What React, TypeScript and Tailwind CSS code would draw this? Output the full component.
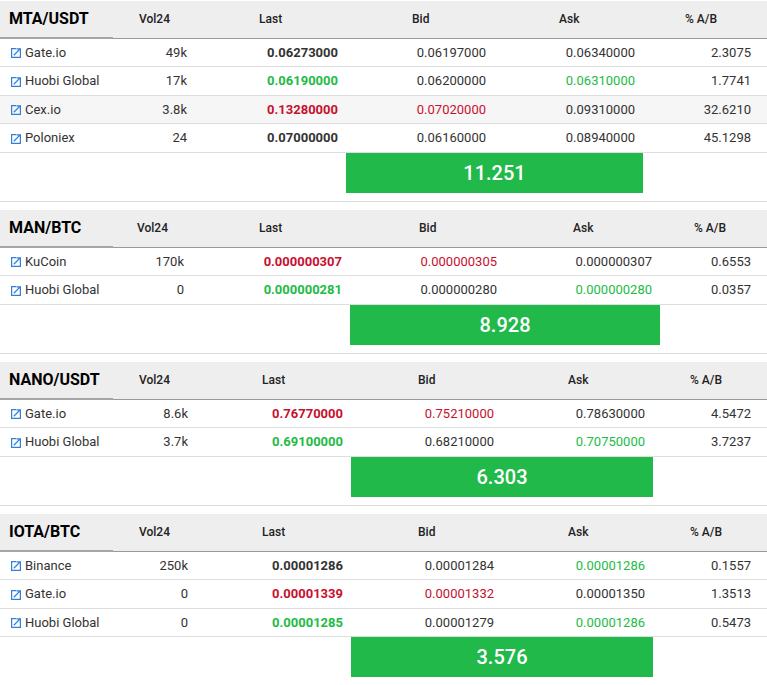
const GREEN = 'text-[#22bb46]';
const RED = 'text-[#c8102e]';

type Cell = { v: string; c?: string };
type Row = { name: string; vol: string; last: Cell; bid: Cell; ask: Cell; pct: string; shaded?: boolean };
type Market = {
  title: string;
  cols: string;
  heads: string[];
  rowsHeight: string;
  spread: string;
  rows: Row[];
};

const markets: Market[] = [
  {
    title: 'MTA/USDT',
    cols: 'grid-cols-[113px_82px_151px_148px_149px_124px]',
    heads: ['pl-[26px]', 'pl-[64px]', 'pl-[66px]', 'pl-[65px]', 'pl-[42px]'],
    rowsHeight: 'h-[114px]',
    spread: '11.251',
    rows: [
      { name: 'Gate.io', vol: '49k', last: { v: '0.06273000' }, bid: { v: '0.06197000' }, ask: { v: '0.06340000' }, pct: '2.3075' },
      { name: 'Huobi Global', vol: '17k', last: { v: '0.06190000', c: GREEN }, bid: { v: '0.06200000' }, ask: { v: '0.06310000', c: GREEN }, pct: '1.7741' },
      { name: 'Cex.io', vol: '3.8k', last: { v: '0.13280000', c: RED }, bid: { v: '0.07020000', c: RED }, ask: { v: '0.09310000' }, pct: '32.6210', shaded: true },
      { name: 'Poloniex', vol: '24', last: { v: '0.07000000' }, bid: { v: '0.06160000' }, ask: { v: '0.08940000' }, pct: '45.1298' },
    ],
  },
  {
    title: 'MAN/BTC',
    cols: 'grid-cols-[113px_79px_158px_155px_155px_107px]',
    heads: ['pl-[24px]', 'pl-[67px]', 'pl-[69px]', 'pl-[68px]', 'pl-[34px]'],
    rowsHeight: 'h-[57px]',
    spread: '8.928',
    rows: [
      { name: 'KuCoin', vol: '170k', last: { v: '0.000000307', c: RED }, bid: { v: '0.000000305', c: RED }, ask: { v: '0.000000307' }, pct: '0.6553' },
      { name: 'Huobi Global', vol: '0', last: { v: '0.000000281', c: GREEN }, bid: { v: '0.000000280' }, ask: { v: '0.000000280', c: GREEN }, pct: '0.0357' },
    ],
  },
  {
    title: 'NANO/USDT',
    cols: 'grid-cols-[113px_83px_155px_151px_151px_114px]',
    heads: ['pl-[26px]', 'pl-[66px]', 'pl-[67px]', 'pl-[66px]', 'pl-[37px]'],
    rowsHeight: 'h-[57px]',
    spread: '6.303',
    rows: [
      { name: 'Gate.io', vol: '8.6k', last: { v: '0.76770000', c: RED }, bid: { v: '0.75210000', c: RED }, ask: { v: '0.78630000' }, pct: '4.5472' },
      { name: 'Huobi Global', vol: '3.7k', last: { v: '0.69100000', c: GREEN }, bid: { v: '0.68210000' }, ask: { v: '0.70750000', c: GREEN }, pct: '3.7237' },
    ],
  },
  {
    title: 'IOTA/BTC',
    cols: 'grid-cols-[113px_83px_155px_151px_151px_114px]',
    heads: ['pl-[26px]', 'pl-[66px]', 'pl-[67px]', 'pl-[66px]', 'pl-[37px]'],
    rowsHeight: 'h-[85px]',
    spread: '3.576',
    rows: [
      { name: 'Binance', vol: '250k', last: { v: '0.00001286' }, bid: { v: '0.00001284' }, ask: { v: '0.00001286', c: GREEN }, pct: '0.1557' },
      { name: 'Gate.io', vol: '0', last: { v: '0.00001339', c: RED }, bid: { v: '0.00001332', c: RED }, ask: { v: '0.00001350' }, pct: '1.3513' },
      { name: 'Huobi Global', vol: '0', last: { v: '0.00001285', c: GREEN }, bid: { v: '0.00001279' }, ask: { v: '0.00001286', c: GREEN }, pct: '0.5473' },
    ],
  },
];

function LinkIcon() {
  return (
    <svg viewBox="0 0 10 10" className="w-[10px] h-[10px] mt-px mr-1 shrink-0" fill="none" stroke="#2f7fdb">
      <path d="M5 .6H.6v8.8h8.8V5" strokeWidth="1.2" />
      <path d="M2.8 7.2L8.6 1.4M5.4 .9h4v4" strokeWidth="1.3" />
    </svg>
  );
}

function MarketTable({ m }: { m: Market }) {
  const labels = ['Vol24', 'Last', 'Bid', 'Ask', '% A/B'];
  return (
    <div className="mb-2 border-b border-[#ddd]">
      <div className={`grid ${m.cols} h-[38px] bg-[#eeeeee] border-b border-[#999] items-center text-xs text-[#222] font-medium`}>
        <div className="h-[38px] flex items-center pl-[9px] text-base font-bold text-black border-b-2 border-[#a5a5a5]">{m.title}</div>
        {labels.map((label, i) => (
          <div key={label} className={`${m.heads[i]} pb-[2px]`}>{label}</div>
        ))}
      </div>
      <div className={m.rowsHeight}>
        {m.rows.map((r) => (
          <div key={r.name} className={`grid ${m.cols} h-[28.45px] items-center border-b border-[#ddd] text-[13px] text-[#333] ${r.shaded ? 'bg-[#f6f6f6]' : ''}`}>
            <div className="flex items-center pl-[11px] whitespace-nowrap"><LinkIcon />{r.name}</div>
            <div className="text-right pr-2">{r.vol}</div>
            <div className={`text-right pr-2 font-bold ${r.last.c ?? 'text-[#333]'}`}>{r.last.v}</div>
            <div className={`text-right pr-2 ${r.bid.c ?? ''}`}>{r.bid.v}</div>
            <div className={`text-right pr-2 ${r.ask.c ?? ''}`}>{r.ask.v}</div>
            <div className="text-right pr-4">{r.pct}</div>
          </div>
        ))}
      </div>
      <div className={`grid ${m.cols} pb-2`}>
        <div className="col-start-4 col-span-2 h-10 bg-[#21b94a] text-white text-xl font-medium flex items-center justify-center">{m.spread}</div>
      </div>
    </div>
  );
}

export default function App() {
  return (
    <div className="w-[767px] h-[685px] overflow-hidden bg-white pt-px font-['Roboto',sans-serif]">
      {markets.map((m) => (
        <MarketTable key={m.title} m={m} />
      ))}
    </div>
  );
}
